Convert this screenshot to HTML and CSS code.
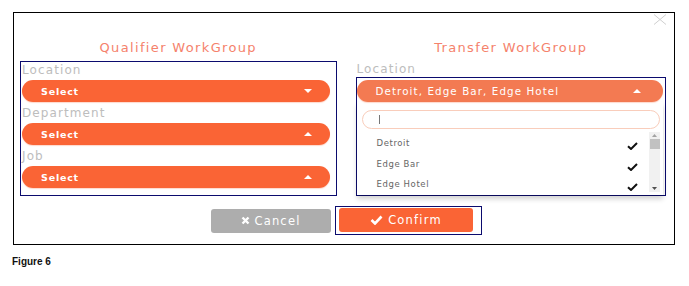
FILE: index.html
```html
<!DOCTYPE html>
<html lang="en">
<head>
    <meta charset="UTF-8">
    <meta name="viewport" content="width=device-width, initial-scale=1.0">
    <title>Figure 6</title>
    <link rel="stylesheet" href="styles.css">
</head>
<body>
    <div class="frame">
        <span class="close">
            <svg width="14" height="11" viewBox="0 0 14 11"><path d="M1 0.5L13 10.5M13 0.5L1 10.5" stroke="#cfcfcf" stroke-width="1"/></svg>
        </span>
        <div class="columns">
            <div class="col colLeft">
                <h2 class="title">Qualifier WorkGroup</h2>
                <div class="box">
                    <div class="label">Location</div>
                    <div class="pill">
                        <span>Select</span>
                        <svg class="caret" width="8" height="4" viewBox="0 0 8 4"><path d="M0 0H8L4 4Z" fill="#fff"/></svg>
                    </div>
                    <div class="label">Department</div>
                    <div class="pill">
                        <span>Select</span>
                        <svg class="caret" width="8" height="4" viewBox="0 0 8 4"><path d="M0 4H8L4 0Z" fill="#fff"/></svg>
                    </div>
                    <div class="label">Job</div>
                    <div class="pill">
                        <span>Select</span>
                        <svg class="caret" width="8" height="4" viewBox="0 0 8 4"><path d="M0 4H8L4 0Z" fill="#fff"/></svg>
                    </div>
                </div>
            </div>
            <div class="col colRight">
                <h2 class="title">Transfer WorkGroup</h2>
                <div class="label labelRight">Location</div>
                <div class="box boxRight">
                    <div class="pill pillOpen">
                        <span>Detroit, Edge Bar, Edge Hotel</span>
                        <svg class="caret" width="8" height="4" viewBox="0 0 8 4"><path d="M0 4H8L4 0Z" fill="#fff"/></svg>
                    </div>
                    <div class="dropdown">
                        <div class="search"><span class="cursor"></span></div>
                        <div class="listArea">
                            <ul class="list">
                                <li><span>Detroit</span><svg width="11" height="8" viewBox="0 0 11 8"><path d="M1 4.2L4 7L10 1" stroke="#111" stroke-width="2" fill="none"/></svg></li>
                                <li><span>Edge Bar</span><svg width="11" height="8" viewBox="0 0 11 8"><path d="M1 4.2L4 7L10 1" stroke="#111" stroke-width="2" fill="none"/></svg></li>
                                <li><span>Edge Hotel</span><svg width="11" height="8" viewBox="0 0 11 8"><path d="M1 4.2L4 7L10 1" stroke="#111" stroke-width="2" fill="none"/></svg></li>
                            </ul>
                            <div class="scrollbar">
                                <svg width="5" height="3" viewBox="0 0 5 3"><path d="M0 3H5L2.5 0Z" fill="#a3a3a3"/></svg>
                                <div class="thumb"></div>
                                <div class="track"></div>
                                <svg width="5" height="3" viewBox="0 0 5 3"><path d="M0 0H5L2.5 3Z" fill="#505050"/></svg>
                            </div>
                        </div>
                    </div>
                </div>
            </div>
        </div>
        <div class="buttons">
            <button class="btn btnCancel">
                <svg width="9" height="9" viewBox="0 0 9 9"><path d="M1.5 1.5L7.5 7.5M7.5 1.5L1.5 7.5" stroke="#fff" stroke-width="2.4"/></svg>
                Cancel
            </button>
            <div class="confirmWrap">
                <button class="btn btnConfirm">
                    <svg width="13" height="10" viewBox="0 0 13 10"><path d="M1.5 5L5 8.5L11.5 1.5" stroke="#fff" stroke-width="2.6" fill="none"/></svg>
                    Confirm
                </button>
            </div>
        </div>
    </div>
    <p class="caption">Figure 6</p>
</body>
</html>
```

FILE: styles.css
```css
*
{
    box-sizing: border-box;
}
body
{
    margin: 0px;
    background-color: #fff;
    font-family: "DejaVu Sans", sans-serif;
}
.frame
{
    position: relative;
    margin: 12px 0px 0px 13px;
    width: 662px;
    height: 233px;
    border: 1px solid #000;
}
.close
{
    position: absolute;
    top: 1px;
    right: 7px;
    line-height: 0;
}
.columns
{
    display: flex;
    padding: 0px 8px 0px 6px;
    gap: 19px;
}
.col
{
    display: flex;
    flex-direction: column;
}
.colLeft
{
    width: 317px;
}
.colRight
{
    width: 311px;
}
.title
{
    margin: 27px 0px 0px 0px;
    height: 21px;
    font-size: 13px;
    font-weight: normal;
    text-align: center;
    color: #f5826c;
    letter-spacing: 1.35px;
}
.box
{
    border: 1.5px solid #0b0b6e;
    padding: 0px 6px 6px 1px;
    height: 135px;
}
.label
{
    height: 18px;
    padding-top: 1px;
    font-size: 12px;
    color: #bdbdbd;
    letter-spacing: 1.1px;
}
.pill
{
    display: flex;
    align-items: center;
    justify-content: space-between;
    height: 22px;
    padding: 0px 18px 0px 19px;
    margin-bottom: 3px;
    border-radius: 11px;
    background-color: #fa6435;
    color: #fff;
    font-size: 9.5px;
    font-weight: bold;
    letter-spacing: 0.8px;
    box-shadow: 0px 1px 1px rgba(250, 100, 53, 0.25);
}
.labelRight
{
    margin-left: 1px;
    height: 16px;
}
.boxRight
{
    height: 119px;
    padding: 2px 2px 0px 0px;
    border-width: 1px;
}
.pillOpen
{
    background-color: #f37a52;
    font-weight: normal;
    font-size: 10.3px;
    letter-spacing: 1.1px;
    padding-left: 19px;
    padding-right: 22px;
    margin-bottom: 0px;
}
.dropdown
{
    padding: 8px 3px 0px 5px;
    height: 93px;
    box-shadow: 0px 4px 5px rgba(0, 0, 0, 0.18);
}
.search
{
    height: 19px;
    border: 1px solid #f9cdbb;
    border-radius: 10px;
    display: flex;
    align-items: center;
    padding-left: 16px;
}
.cursor
{
    width: 1px;
    height: 9px;
    background-color: #777;
}
.listArea
{
    display: flex;
    margin-top: 3px;
}
.list
{
    list-style: none;
    margin: 0px;
    padding: 0px 11px 0px 15px;
    flex: 1;
}
.list li
{
    display: flex;
    justify-content: space-between;
    align-items: center;
    height: 20.5px;
    padding-top: 2px;
    font-size: 8.5px;
    color: #666;
    letter-spacing: 0.6px;
}
.list li svg
{
    margin-top: 6px;
}
.scrollbar
{
    width: 11px;
    height: 60px;
    background-color: #f1f1f1;
    display: flex;
    flex-direction: column;
    align-items: center;
    padding: 2px 0px;
    gap: 2px;
}
.thumb
{
    width: 10px;
    height: 10px;
    background-color: #c1c1c1;
}
.track
{
    flex: 1;
}
.buttons
{
    display: flex;
    justify-content: center;
    align-items: center;
    gap: 4px;
    margin-top: 10px;
    padding-left: 5px;
}
.btn
{
    display: flex;
    align-items: center;
    justify-content: center;
    gap: 4px;
    height: 24px;
    border: 0px;
    border-radius: 3px;
    color: #fff;
    font-family: "DejaVu Sans", sans-serif;
    font-size: 11.5px;
    letter-spacing: 1.2px;
}
.btnCancel
{
    width: 120px;
    background-color: #adadad;
}
.confirmWrap
{
    border: 1px solid #0b0b6e;
    padding: 1px 8px 2px 3px;
}
.btnConfirm
{
    width: 134px;
    background-color: #fa6435;
    gap: 5px;
}
.caption
{
    margin: 11px 0px 0px 12px;
    font-family: "Liberation Sans", Arial, sans-serif;
    font-size: 10px;
    font-weight: bold;
    color: #111;
}
```
